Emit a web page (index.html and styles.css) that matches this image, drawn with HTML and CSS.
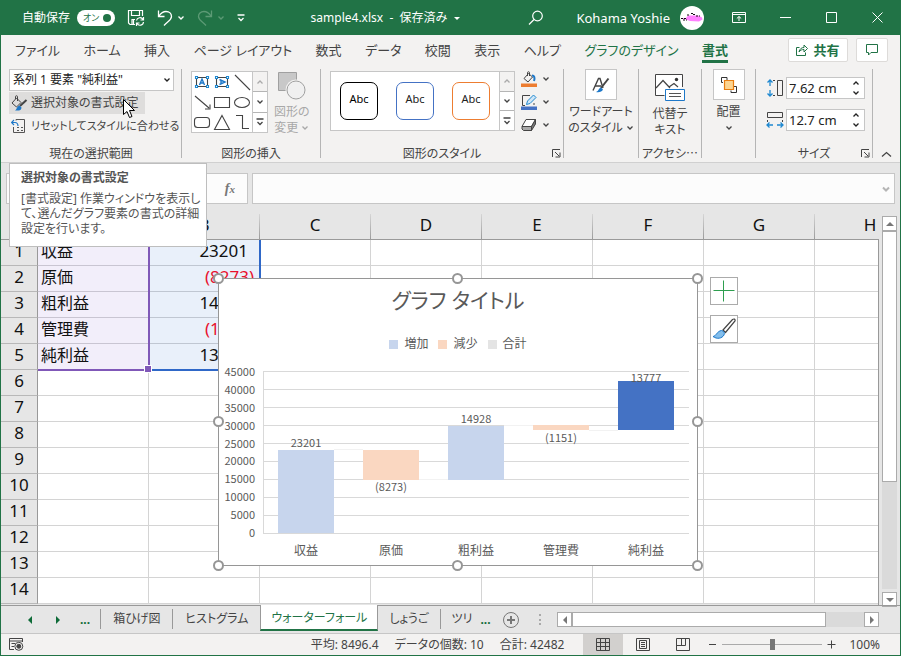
FILE: index.html
```html
<!DOCTYPE html>
<html lang="ja">
<head>
  <meta charset="UTF-8">
  <meta name="viewport" content="width=device-width, initial-scale=1.0">
  <title>sample4.xlsx</title>
  <link rel="stylesheet" href="styles.css">
</head>
<body>
  <!-- Shared icons -->
  <svg class="symbols" width="0" height="0" aria-hidden="true">
    <symbol id="chevron" viewBox="0 0 8 8"><path d="M1.5 2.5 4 5 6.500 2.500" fill="none" stroke="currentColor" stroke-width="1.300"/></symbol>
    <symbol id="chevron-up" viewBox="0 0 8 8"><path d="M1.500 5.500 4 3 6.500 5.500" fill="none" stroke="currentColor" stroke-width="1.300"/></symbol>
    <symbol id="more" viewBox="0 0 8 8"><path d="M0.500 1H7.500M1.500 4 4 6.500 6.500 4" fill="none" stroke="currentColor" stroke-width="1.300"/></symbol>
    <symbol id="launcher" viewBox="0 0 9 9"><path d="M0.500 8V0.500H8M3 3 7 7M8 3.500V8H3.500" fill="none" stroke="#444" stroke-width="1"/></symbol>
  </svg>

  <div class="window">
    <!-- Title bar -->
    <header class="titlebar">
      <div class="quick">
        <span class="quick-label" id="autosave">自動保存</span>
        <button class="toggle" role="switch" aria-checked="true" aria-labelledby="autosave">オン<span class="toggle-dot"></span></button>
        <button class="icon-btn save-btn" aria-label="保存">
          <svg width="18" height="18" viewBox="0 0 18 18" fill="none" stroke="#fff" stroke-width="1.200"><path d="M8 15.500H3L1.500 14V1.500H15.500V7M4.500 1.500V6.500H12.500V1.500M5 15V10.500H8M6.500 11V15"/><path d="M9.500 11.500A3.500 3.500 0 0 1 16 10.500M16.500 8V11H13.500M16.500 13A3.500 3.500 0 0 1 10 14.500M9.500 17V14H12.500"/></svg>
        </button>
        <button class="icon-btn" aria-label="元に戻す">
          <svg width="16" height="18" viewBox="0 0 16 18" fill="none" stroke="#fff" stroke-width="1.300"><path d="M1.500 1.500V7.500H7.500M2 7C4 4 6 2.500 9 2.500C12.500 2.500 14.500 5 14.500 7.500C14.500 11 11 12 7 16.500"/></svg>
          <svg class="chev" width="8" height="8"><use href="#chevron"/></svg>
        </button>
        <button class="icon-btn dim" aria-label="やり直し">
          <svg width="16" height="18" viewBox="0 0 16 18" fill="none" stroke="#5c9a75" stroke-width="1.300"><path d="M14.500 1.500V7.500H8.500M14 7C12 4 10 2.500 7 2.500C3.500 2.500 1.500 5 1.500 7.500C1.500 11 5 12 9 16.500"/></svg>
          <svg class="chev" width="8" height="8"><use href="#chevron"/></svg>
        </button>
        <button class="icon-btn more-btn" aria-label="クイック アクセス"><svg width="8" height="8"><use href="#more"/></svg></button>
      </div>
      <button class="doc-title">sample4.xlsx&nbsp; -&nbsp; 保存済み <span class="caret"></span></button>
      <div class="account">
        <button class="icon-btn" aria-label="検索">
          <svg width="16" height="16" viewBox="0 0 16 16" fill="none" stroke="#fff" stroke-width="1.200"><circle cx="9.500" cy="6" r="4.800"/><path d="M6 9.500 1 14.500"/></svg>
        </button>
        <span class="user">Kohama Yoshie</span>
        <svg class="avatar" width="24" height="24" viewBox="0 0 24 24"><circle cx="12" cy="12" r="12" fill="#fff"/><path d="M1 12H6L8 9.500H14L18 9.500 22 11.500 22.500 13.500 19 15.500 10 15 6 13.500 2 13Z" fill="#ff80ff"/><path d="M1 12.500H6M3 14H7M7 9H10M11 7.500H13M13 8.500H16M16 10H20" stroke="#111" stroke-width="1" fill="none" stroke-dasharray="2 1"/></svg>
      </div>
      <div class="window-buttons">
        <button aria-label="リボンの表示オプション"><svg width="14" height="11" viewBox="0 0 14 11" fill="none" stroke="#fff"><path d="M0.500 0.500H13.500V10.500H0.500ZM0.500 2.500H13.500M7 9V4.500M4.800 6.500 7 4.500 9.200 6.500"/></svg></button>
        <button aria-label="最小化"><svg width="11" height="11" viewBox="0 0 11 11" stroke="#fff"><path d="M0 5.500H11"/></svg></button>
        <button aria-label="最大化"><svg width="11" height="11" viewBox="0 0 11 11" fill="none" stroke="#fff"><path d="M0.500 0.500H10.500V10.500H0.500Z"/></svg></button>
        <button aria-label="閉じる"><svg width="11" height="11" viewBox="0 0 11 11" stroke="#fff"><path d="M0.500 0.500 10.500 10.500M10.500 0.500 0.500 10.500"/></svg></button>
      </div>
    </header>

    <!-- Ribbon tabs -->
    <nav class="tabs">
      <div class="tab-list">
        <a href="#">ファイル</a>
        <a href="#">ホーム</a>
        <a href="#">挿入</a>
        <a href="#">ページ レイアウト</a>
        <a href="#">数式</a>
        <a href="#">データ</a>
        <a href="#">校閲</a>
        <a href="#">表示</a>
        <a href="#">ヘルプ</a>
        <a href="#" class="context">グラフのデザイン</a>
        <a href="#" class="context active">書式</a>
      </div>
      <div class="tab-actions">
        <button class="share">
          <svg width="12" height="12" viewBox="0 0 12 12" fill="none" stroke="#217346"><path d="M3.500 3.500H0.500V11.500H9.500V8.500M3 8C3.500 5 5.500 3.500 8 3.500V1L11.500 4.500 8 8V5.500C6 5.500 4.500 6 3 8Z"/></svg>
          共有
        </button>
        <button class="comment" aria-label="コメント">
          <svg width="12" height="12" viewBox="0 0 12 12" fill="none" stroke="#217346"><path d="M0.500 0.500H11.500V8.500H5L2.500 11V8.500H0.500Z"/></svg>
        </button>
      </div>
    </nav>

    <!-- Ribbon -->
    <section class="ribbon">
      <div class="group selection">
        <div class="group-body column">
          <div class="select-box">
            <select aria-label="グラフ要素"><option>系列 1 要素 "純利益"</option></select>
            <svg width="8" height="8"><use href="#chevron"/></svg>
          </div>
          <button class="cmd hover">
            <svg width="17" height="16" viewBox="0 0 17 16" fill="none"><path d="M4.500 4V1.500C4.500 0.500 6.500 0.500 6.500 1.500V6M5.500 3 1 8 5.500 12 10 7.500Z" stroke="#444"/><path d="M15.500 5 9 11" stroke="#444" stroke-width="2"/><path d="M8 15.500H4C6 14.500 5.500 11.500 8.500 10.500L10.500 12.500C10.500 14.500 9 15.500 8 15.500Z" fill="#1e78c8"/></svg>
            選択対象の書式設定
          </button>
          <button class="cmd small">
            <svg width="17" height="16" viewBox="0 0 17 16" fill="none"><path d="M5 2.500V1.500H13.500V14.500H2.500V9" stroke="#555"/><path d="M0.500 4.500H4C6 4.500 7 6 7 8M3 2 0.500 4.500 3 7" stroke="#1e78c8" stroke-width="1.200"/><path d="M6 9.500H8M6 12.500H8M10 9.500H12M10 12.500H12" stroke="#555"/></svg>
            リセットしてスタイルに合わせる
          </button>
          <svg class="cursor" width="13" height="20" viewBox="0 0 13 20"><path d="M0.500 0.500V15.500L4 12.500 6.500 18.500 9 17.500 6.500 11.500H11.500Z" fill="#fff" stroke="#000"/></svg>
        </div>
        <div class="group-label">現在の選択範囲</div>
        <div class="tooltip" role="tooltip">
          <strong>選択対象の書式設定</strong>
          <p>[書式設定] 作業ウィンドウを表示し<br>て、選んだグラフ要素の書式の詳細<br>設定を行います。</p>
        </div>
      </div>

      <div class="group">
        <div class="group-body shapes">
          <div class="gallery">
            <svg width="60" height="60" viewBox="0 0 60 60" fill="none" stroke="#444" stroke-width="1.100">
              <path d="M4.500 5.500H15.500V14.500H4.500ZM24.500 5.500H35.500V14.500H24.500Z"/>
              <path d="M7.500 13 10 7 12.500 13M8.500 11H11.500M27.500 7.500 33 10 27.500 12.500M29 8.500V11.500" stroke="#1e78c8" stroke-width="1.400"/>
              <g fill="#fff" stroke="#1e88d0"><path d="M3.500 4.500h2v2h-2zM14.500 4.500h2v2h-2zM3.500 13.500h2v2h-2zM14.500 13.500h2v2h-2zM23.500 4.500h2v2h-2zM34.500 4.500h2v2h-2zM23.500 13.500h2v2h-2zM34.500 13.500h2v2h-2z"/></g>
              <path d="M43 3 58 18M3 24 17 36M18 32.500V37H13M22.500 25.500H37.500V35.500H22.500Z"/>
              <ellipse cx="50" cy="30.500" rx="7.500" ry="5"/>
              <rect x="2.500" y="45.500" width="15" height="10" rx="3"/>
              <path d="M30 43.500 37.500 57.500H22.500ZM44 43.500H50.500V56.500H57"/>
            </svg>
            <div class="gallery-scroll">
              <button class="off" aria-label="上"><svg width="8" height="8"><use href="#chevron-up"/></svg></button>
              <button aria-label="下"><svg width="8" height="8"><use href="#chevron"/></svg></button>
              <button aria-label="その他"><svg width="8" height="8"><use href="#more"/></svg></button>
            </div>
          </div>
          <button class="big disabled" disabled>
            <svg width="28" height="30" viewBox="0 0 28 30" stroke="#a0a0a0"><path d="M0.500 1.500H18.500V19.500H0.500Z" fill="#c8c8c8"/><circle cx="18" cy="19" r="10.500" fill="#f3f2f1" stroke="none"/><circle cx="18" cy="19" r="9" fill="#f0f0f0"/></svg>
            図形の<br>変更 <svg width="8" height="8"><use href="#chevron"/></svg>
          </button>
        </div>
        <div class="group-label">図形の挿入</div>
      </div>

      <div class="group">
        <div class="group-body styles">
          <div class="gallery wide">
            <button class="preset black">Abc</button>
            <button class="preset blue">Abc</button>
            <button class="preset orange">Abc</button>
            <div class="gallery-scroll">
              <button class="off" aria-label="上"><svg width="8" height="8"><use href="#chevron-up"/></svg></button>
              <button aria-label="下"><svg width="8" height="8"><use href="#chevron"/></svg></button>
              <button aria-label="その他"><svg width="8" height="8"><use href="#more"/></svg></button>
            </div>
          </div>
          <div class="style-tools">
            <button aria-label="図形の塗りつぶし">
              <svg width="17" height="16" viewBox="0 0 17 16" fill="none"><path d="M6.500 5V1.500C6.500 0.500 8.500 0.500 8.500 1.500V5M7.500 2.500 3 7.500 7 11 11.500 6Z" stroke="#444"/><path d="M11 4.500C13.500 4.500 14 7 13 10" stroke="#1e78c8" stroke-width="2"/><path d="M0 12.500H16V16H0Z" fill="#ed7d31"/></svg>
              <svg width="8" height="8"><use href="#chevron"/></svg>
            </button>
            <button aria-label="図形の枠線">
              <svg width="17" height="16" viewBox="0 0 17 16" fill="none"><path d="M9 1.500H1.500V11.500H4M13 9V11" stroke="#444"/><path d="M5.500 10.500 6.500 7 12.500 1 15 3.500 9 9.500Z" fill="#cfe6f7" stroke="#1e88d0"/><path d="M0 12.500H16V16H0Z" fill="#4472c4"/></svg>
              <svg width="8" height="8"><use href="#chevron"/></svg>
            </button>
            <button aria-label="図形の効果">
              <svg width="17" height="16" viewBox="0 0 17 16"><path d="M5 2.500H14.500L10.500 9.500H1Z" fill="#fff" stroke="#444"/><path d="M1 9.500H10.500V13.500H2.500L1 12Z" fill="#aaa" stroke="#444"/><path d="M14.500 2.500V7L10.500 13.500V9.500Z" fill="#777" stroke="#444"/></svg>
              <svg width="8" height="8"><use href="#chevron"/></svg>
            </button>
          </div>
        </div>
        <div class="group-label">図形のスタイル</div>
        <button class="launcher" aria-label="図形の書式設定"><svg width="9" height="9"><use href="#launcher"/></svg></button>
      </div>

      <div class="group">
        <button class="big">
          <span class="frame"><svg width="20" height="18" viewBox="0 0 20 18" fill="none"><path d="M2 14.500 7.500 2.500H9L12 12M4 10H10" stroke="#444" stroke-width="1.400"/><path d="M17.500 2.500 10 12" stroke="#444" stroke-width="2"/><path d="M5 16C8 15 7.500 12 10 11.500L12 13.500C11 16 8 16.500 5 16Z" fill="#1e78c8"/></svg></span>
          ワードアート<br>のスタイル <svg width="8" height="8"><use href="#chevron"/></svg>
        </button>
      </div>

      <div class="group">
        <button class="big">
          <svg class="alt-icon" width="32" height="32" viewBox="0 0 32 32" fill="none"><path d="M10.500 24.500H1.500V3.500H28.500V16" stroke="#444" fill="#fff"/><path d="M2 17 9 9.500 16 17M15 16 20 12.500 24 16" stroke="#444" stroke-width="1.200"/><circle cx="22.500" cy="8.500" r="1.700" fill="#333"/><path d="M11.500 18.500H30.500V29.500H11.500Z" fill="#fff" stroke="#1e78c8"/><path d="M15 22.500H27M15 25.500H27" stroke="#555"/></svg>
          代替テ<br>キスト
        </button>
        <div class="group-label">アクセシ…</div>
      </div>

      <div class="group">
        <button class="big">
          <span class="frame"><svg width="18" height="18" viewBox="0 0 18 18" fill="none"><path d="M3 6.500H1.500V1.500H7V4M11 14.500V16.500H16.500V10.500H14" stroke="#333"/><path d="M4.500 4.500H13.500V13.500H4.500Z" fill="#fcd490" stroke="#e87d10" stroke-width="1.200"/></svg></span>
          配置<br><svg width="8" height="8"><use href="#chevron"/></svg>
        </button>
      </div>

      <div class="group">
        <div class="group-body column sizes">
          <label class="size-row">
            <svg width="18" height="18" viewBox="0 0 18 18" fill="none"><path d="M4 1V7M1.500 3.500 4 1 6.500 3.500M4 11V17M1.500 14.500 4 17 6.500 14.500" stroke="#1e88d0" stroke-width="1.300"/><path d="M7 1.500H9M7 16.500H9M11.500 1.500H16.500V16.500H11.500Z" stroke="#444"/></svg>
            <span class="spin"><input type="text" value="7.62 cm" aria-label="高さ"><span class="spin-btns"><svg width="8" height="8"><use href="#chevron-up"/></svg><svg width="8" height="8"><use href="#chevron"/></svg></span></span>
          </label>
          <label class="size-row">
            <svg width="18" height="18" viewBox="0 0 18 18" fill="none"><path d="M1.500 1.500H16.500V6.500H1.500ZM1.500 9V11M16.500 9V11" stroke="#444"/><path d="M7 14H1M3.500 11.500 1 14 3.500 16.500M11 14H17M14.500 11.500 17 14 14.500 16.500" stroke="#1e88d0" stroke-width="1.300"/></svg>
            <span class="spin"><input type="text" value="12.7 cm" aria-label="幅"><span class="spin-btns"><svg width="8" height="8"><use href="#chevron-up"/></svg><svg width="8" height="8"><use href="#chevron"/></svg></span></span>
          </label>
        </div>
        <div class="group-label">サイズ</div>
        <button class="launcher" aria-label="サイズとプロパティ"><svg width="9" height="9"><use href="#launcher"/></svg></button>
      </div>

      <div class="collapse">
        <button aria-label="リボンを折りたたむ"><svg width="11" height="7" viewBox="0 0 11 7" fill="none" stroke="#444" stroke-width="1.300"><path d="M1 5.500 5.500 1.500 10 5.500"/></svg></button>
      </div>
    </section>

    <!-- Formula bar -->
    <div class="formula">
      <input class="name-box" type="text" aria-label="名前ボックス">
      <div class="fx-box"><button class="fx">f<small>x</small></button></div>
      <div class="formula-field">
        <input type="text" aria-label="数式バー">
        <svg width="8" height="8" viewBox="0 0 8 8" fill="none" stroke="#b5b5b5" stroke-width="2"><path d="M1 2.500 4 5.500 7 2.500"/></svg>
      </div>
    </div>

    <!-- Sheet -->
    <main class="sheet-area">
      <div class="sheet">
        <table>
          <thead>
            <tr><th class="corner"></th><th>A</th><th>B</th><th>C</th><th>D</th><th>E</th><th>F</th><th>G</th><th>H</th></tr>
          </thead>
          <tbody>
            <tr><th>1</th><td class="cat">収益</td><td class="val">23201</td><td></td><td></td><td></td><td></td><td></td><td></td></tr>
            <tr><th>2</th><td class="cat">原価</td><td class="val minus">(8273)</td><td></td><td></td><td></td><td></td><td></td><td></td></tr>
            <tr><th>3</th><td class="cat">粗利益</td><td class="val">14928</td><td></td><td></td><td></td><td></td><td></td><td></td></tr>
            <tr><th>4</th><td class="cat">管理費</td><td class="val minus">(1151)</td><td></td><td></td><td></td><td></td><td></td><td></td></tr>
            <tr><th>5</th><td class="cat">純利益</td><td class="val">13777</td><td></td><td></td><td></td><td></td><td></td><td></td></tr>
            <tr><th>6</th><td></td><td></td><td></td><td></td><td></td><td></td><td></td><td></td></tr>
            <tr><th>7</th><td></td><td></td><td></td><td></td><td></td><td></td><td></td><td></td></tr>
            <tr><th>8</th><td></td><td></td><td></td><td></td><td></td><td></td><td></td><td></td></tr>
            <tr><th>9</th><td></td><td></td><td></td><td></td><td></td><td></td><td></td><td></td></tr>
            <tr><th>10</th><td></td><td></td><td></td><td></td><td></td><td></td><td></td><td></td></tr>
            <tr><th>11</th><td></td><td></td><td></td><td></td><td></td><td></td><td></td><td></td></tr>
            <tr><th>12</th><td></td><td></td><td></td><td></td><td></td><td></td><td></td><td></td></tr>
            <tr><th>13</th><td></td><td></td><td></td><td></td><td></td><td></td><td></td><td></td></tr>
            <tr><th>14</th><td></td><td></td><td></td><td></td><td></td><td></td><td></td><td></td></tr>
          </tbody>
        </table>
        <div class="range range-values"></div>
        <div class="range range-names"></div>

        <!-- Waterfall chart -->
        <figure class="chart">
          <figcaption>グラフ タイトル</figcaption>
          <ul class="legend">
            <li class="up">増加</li>
            <li class="down">減少</li>
            <li class="total">合計</li>
          </ul>
          <svg class="plot" viewBox="0 0 478 199">
            <path class="gridlines" d="M44 5.500H470M44 23.500H470M44 41.500H470M44 59.500H470M44 77.500H470M44 95.500H470M44 113.500H470M44 131.500H470M44 149.500H470M44.500 5V168M44 167.500H470"/>
            <path class="connectors" d="M115 83.500H144M200 113.500H229M285 59.500H314M370 64.500H399"/>
            <rect class="bar-up" x="59" y="84" width="56" height="83"/>
            <rect class="bar-down" x="144" y="84" width="56" height="30"/>
            <rect class="bar-up" x="229" y="60" width="56" height="54"/>
            <rect class="bar-down" x="314" y="59" width="56" height="5"/>
            <rect class="bar-total" x="399" y="15" width="56" height="49"/>
            <g class="axis">
              <text x="36" y="10">45000</text>
              <text x="36" y="28">40000</text>
              <text x="36" y="46">35000</text>
              <text x="36" y="64">30000</text>
              <text x="36" y="82">25000</text>
              <text x="36" y="99">20000</text>
              <text x="36" y="117">15000</text>
              <text x="36" y="135">10000</text>
              <text x="36" y="153">5000</text>
              <text x="36" y="171">0</text>
            </g>
            <g class="values">
              <text x="87" y="81">23201</text>
              <text x="172" y="125">(8273)</text>
              <text x="257" y="57">14928</text>
              <text x="342" y="76">(1151)</text>
              <text x="427" y="16">13777</text>
            </g>
            <g class="cats">
              <text x="87" y="189">収益</text>
              <text x="172" y="189">原価</text>
              <text x="257" y="189">粗利益</text>
              <text x="342" y="189">管理費</text>
              <text x="427" y="189">純利益</text>
            </g>
          </svg>
          <span class="handle top left"></span>
          <span class="handle top center"></span>
          <span class="handle top right"></span>
          <span class="handle middle left"></span>
          <span class="handle middle right"></span>
          <span class="handle bottom left"></span>
          <span class="handle bottom center"></span>
          <span class="handle bottom right"></span>
          <div class="chart-tools">
            <button aria-label="グラフ要素"><svg width="22" height="22" viewBox="0 0 22 22" stroke="#2e9e4f"><path d="M0.500 10.500H21.500M10.500 0.500V21.500"/></svg></button>
            <button aria-label="グラフ スタイル"><svg width="24" height="22" viewBox="0 0 24 22"><path d="M11 12 20.500 1.500C22 0.500 23.500 1 23 3L13.500 14.500Z" fill="#fff" stroke="#444" stroke-width="1.200"/><path d="M1 18.500C4 18.500 5 13 9.500 12.500C12 13 13 15 12 17C10 20.500 5 21.500 1 18.500Z" fill="#83beec" stroke="#1e78c8"/></svg></button>
          </div>
        </figure>
      </div>
      <div class="vscroll">
        <button aria-label="上へ"><span class="arrow up"></span></button>
        <div class="vtrack"><div class="vthumb"></div></div>
        <button aria-label="下へ"><span class="arrow down"></span></button>
      </div>
    </main>

    <!-- Sheet tabs -->
    <div class="sheet-bar">
      <div class="sheet-nav">
        <button aria-label="前のシート"><span class="arrow left green"></span></button>
        <button aria-label="次のシート"><span class="arrow right green"></span></button>
        <button class="dots">...</button>
      </div>
      <div class="sheet-tabs">
        <button>箱ひげ図</button>
        <button>ヒストグラム</button>
        <button class="current">ウォーターフォール</button>
        <button>しょうご</button>
        <button class="cut">ツリ</button>
      </div>
      <button class="dots">...</button>
      <button class="add" aria-label="新しいシート"><svg width="16" height="16" viewBox="0 0 16 16" fill="none" stroke="#777"><circle cx="8" cy="8" r="7.500"/><path d="M8 4V12M4 8H12" stroke-width="2"/></svg></button>
      <span class="grip"></span>
      <div class="hscroll">
        <button aria-label="左へ"><span class="arrow left"></span></button>
        <div class="htrack"><div class="hthumb"></div></div>
        <button aria-label="右へ"><span class="arrow right"></span></button>
      </div>
    </div>

    <!-- Status bar -->
    <footer class="status">
      <button class="macro" aria-label="マクロの記録"><svg width="15" height="13" viewBox="0 0 15 13" fill="none" stroke="#444"><path d="M5 11.500H0.500V0.500H13.500V4M0.500 3H13.500M2.500 5.500H6M2.500 8.500H5"/><circle cx="9.800" cy="8.300" r="4"/><circle cx="9.800" cy="8.300" r="2" fill="#444"/></svg></button>
      <div class="stats">
        <span>平均: 8496.4</span>
        <span>データの個数: 10</span>
        <span>合計: 42482</span>
      </div>
      <div class="views">
        <button class="on" aria-label="標準"><svg width="14" height="13" viewBox="0 0 14 13" fill="none" stroke="#444"><path d="M0.500 0.500H13.500V12.500H0.500ZM0.500 4.500H13.500M0.500 8.500H13.500M4.500 0.500V12.500M9.500 0.500V12.500"/></svg></button>
        <button aria-label="ページ レイアウト"><svg width="14" height="13" viewBox="0 0 14 13" fill="none" stroke="#444"><path d="M0.500 0.500H13.500V12.500H0.500ZM3.500 2.500H10.500V10.500H3.500ZM5 4.500H9M5 6.500H9M5 8.500H9"/></svg></button>
        <button aria-label="改ページ プレビュー"><svg width="14" height="13" viewBox="0 0 14 13" fill="none" stroke="#444"><path d="M0.500 0.500H13.500V12.500H0.500ZM0.500 7.500H9.500V0.500M5.500 0.500V7.500"/></svg></button>
      </div>
      <div class="zoom">
        <button aria-label="縮小"><svg width="9" height="9" viewBox="0 0 9 9" stroke="#444"><path d="M1 4.500H8"/></svg></button>
        <input type="range" min="0" max="100" value="50" aria-label="ズーム">
        <button aria-label="拡大"><svg width="9" height="9" viewBox="0 0 9 9" stroke="#444"><path d="M0.500 4.500H8.500M4.500 0.500V8.500"/></svg></button>
        <span class="percent">100%</span>
      </div>
    </footer>
  </div>
</body>
</html>
```
FILE: styles.css
```css
* {
  margin: 0;
  padding: 0;
  box-sizing: border-box;
}

body {
  font-family: "Noto Sans", "Noto Sans CJK JP", sans-serif;
  font-size: 12px;
  line-height: 16px;
  font-feature-settings: "palt";
  color: #444;
}

button,
input,
select {
  font: inherit;
  font-feature-settings: inherit;
  color: inherit;
  border: none;
  background: none;
}

svg {
  flex: none;
}

a {
  color: inherit;
  text-decoration: none;
}

.symbols {
  position: absolute;
}

.window {
  display: flex;
  flex-direction: column;
  height: 100vh;
  background: #e6e6e6;
  border: 1px solid #217346;
  border-top: none;
  overflow: hidden;
}

/* Title bar */
.titlebar {
  display: flex;
  align-items: center;
  height: 35px;
  flex: none;
  background: #217346;
  color: #fff;
}

.quick {
  display: flex;
  align-items: center;
  flex: 1 1 310px;
  gap: 12px;
  padding-left: 21px;
}

.quick-label {
  margin-right: -5px;
}

.toggle {
  display: flex;
  align-items: center;
  justify-content: space-between;
  width: 38px;
  height: 16px;
  padding: 0 4px 0 6px;
  border-radius: 8px;
  background: #fff;
  color: #217346;
  font-size: 9px;
}

.toggle-dot {
  width: 8px;
  height: 8px;
  border-radius: 50%;
  background: #217346;
}

.icon-btn {
  display: flex;
  align-items: center;
  gap: 4px;
}

.dim {
  color: #5c9a75;
}

.doc-title {
  flex: none;
  font-size: 12px;
}

.caret {
  display: inline-block;
  margin-left: 4px;
  vertical-align: middle;
  border: 3px solid transparent;
  border-top: 3px solid #fff;
  border-bottom: none;
}

.account {
  display: flex;
  align-items: center;
  justify-content: flex-end;
  flex: 1 1 244px;
}

.user {
  margin: 0 10px 0 32px;
  font-size: 13px;
}

.window-buttons {
  display: flex;
  margin-left: 12px;
}

.window-buttons button {
  display: flex;
  align-items: center;
  justify-content: center;
  width: 46px;
  height: 35px;
}

/* Ribbon tabs */
.tabs {
  display: flex;
  justify-content: space-between;
  height: 31px;
  flex: none;
  padding: 3px 12px 0 14px;
  background: #f3f2f1;
}

.tab-list {
  display: flex;
  justify-content: space-between;
  flex: 0 1 713px;
  font-size: 13px;
}

.tab-list a {
  height: 25px;
  line-height: 24px;
  white-space: nowrap;
}

.context {
  color: #217346;
}

.tab-list .active {
  font-weight: bold;
  border-bottom: 3px solid #217346;
}

.tab-actions {
  display: flex;
  gap: 8px;
}

.tab-actions button {
  display: flex;
  align-items: center;
  justify-content: center;
  gap: 5px;
  height: 24px;
  border: 1px solid #dddbd9;
  border-radius: 2px;
  background: #fff;
  color: #217346;
  font-size: 13px;
  font-weight: bold;
}

.share {
  width: 60px;
}

.comment {
  width: 32px;
}

/* Ribbon */
.ribbon {
  display: grid;
  grid-template-columns: 181fr 139fr 243fr 75fr 63fr 54fr 117fr 27fr;
  height: 97px;
  flex: none;
  padding: 3px 0 4px;
  border-bottom: 1px solid #d0d0d0;
  background: #f3f2f1;
}

.group {
  position: relative;
  display: flex;
  flex-direction: column;
  min-width: 0;
  border-right: 1px solid #b5b5b5;
}

.group-body {
  display: flex;
}

.column {
  position: relative;
  flex-direction: column;
  align-items: flex-start;
}

.group-label {
  margin-top: auto;
  font-family: "Noto Sans CJK JP", sans-serif;
  line-height: 11px;
  text-align: center;
  white-space: nowrap;
}

.launcher {
  position: absolute;
  right: 2px;
  bottom: 0;
  height: 9px;
  line-height: 0;
}

.selection .group-body {
  padding: 0 7px 0 8px;
  gap: 1px;
}

.select-box {
  display: flex;
  align-items: center;
  width: 100%;
  height: 22px;
  padding-right: 2px;
  border: 1px solid #c6c6c6;
  background: #fff;
  color: #222;
}

.select-box select {
  flex: 1;
  appearance: none;
  padding-left: 3px;
}

.cmd {
  display: flex;
  align-items: center;
  gap: 3px;
  height: 22px;
  padding: 0 6px 0 2px;
  white-space: nowrap;
}

.cmd.small {
  padding-right: 0;
  font-size: 11px;
}

.cmd.hover {
  background: #dedddc;
}

.cursor {
  position: absolute;
  left: 122px;
  top: 30px;
}

.tooltip {
  position: absolute;
  z-index: 5;
  left: 8px;
  top: 94px;
  width: 198px;
  padding: 6px 6px 10px 11px;
  border: 1px solid #bebebe;
  background: #fff;
  color: #555;
  line-height: 15px;
  white-space: nowrap;
}

.tooltip strong {
  display: block;
  margin-bottom: 6px;
}

.shapes {
  padding: 2px 0 0 9px;
  gap: 6px;
}

.gallery {
  display: flex;
  height: 62px;
  border: 1px solid #c6c6c6;
  background: #fff;
}

.gallery-scroll {
  display: flex;
  flex-direction: column;
  width: 15px;
  border-left: 1px solid #c6c6c6;
}

.gallery-scroll button {
  display: flex;
  align-items: center;
  justify-content: center;
  flex: 1;
  background: #fff;
}

.gallery-scroll button + button {
  border-top: 1px solid #b5b5b5;
}

.gallery-scroll .off {
  background: #f3f2f1;
  color: #aaa;
}

.big {
  line-height: 16px;
  text-align: center;
  white-space: nowrap;
}

.big > svg:first-child {
  display: block;
  margin: 0 auto 3px;
}

.disabled {
  color: #a8a8a8;
}

.big > .alt-icon:first-child {
  margin-top: 2px;
}

.frame {
  display: flex;
  align-items: center;
  justify-content: center;
  width: 32px;
  height: 31px;
  margin: 0 auto 4px;
  border: 1px solid #c6c6c6;
  background: #fff;
}

.styles {
  padding: 2px 0 0 9px;
  gap: 6px;
}

.wide {
  align-items: center;
  gap: 18px;
  height: 60px;
  padding-left: 9px;
}

.wide .gallery-scroll {
  align-self: stretch;
  margin-left: -9px;
}

.preset {
  width: 38px;
  height: 38px;
  padding-bottom: 4px;
  border: 1px solid;
  border-radius: 7px;
  font-size: 11px;
}

.black {
  border-color: #000;
  color: #000;
}

.blue {
  border-color: #4472c4;
  color: #222;
}

.orange {
  border-color: #ed7d31;
  color: #222;
}

.style-tools {
  display: flex;
  flex-direction: column;
  gap: 7px;
}

.style-tools button {
  display: flex;
  align-items: center;
  gap: 4px;
}

.sizes {
  gap: 10px;
  padding: 8px 7px 0 10px;
}

.size-row {
  display: flex;
  align-items: center;
  gap: 2px;
}

.spin {
  display: flex;
  height: 22px;
  width: 79px;
  border: 1px solid #c6c6c6;
  background: #fff;
  color: #222;
}

.spin input {
  flex: 1;
  min-width: 0;
  padding-left: 2px;
  font-size: 13px;
}

.spin-btns {
  display: flex;
  flex-direction: column;
  justify-content: center;
  gap: 2px;
  padding-right: 4px;
}

.collapse {
  display: flex;
  align-items: flex-end;
  justify-content: center;
}

.collapse button {
  line-height: 0;
}

/* Formula bar */
.formula {
  display: flex;
  gap: 4px;
  height: 51px;
  flex: none;
  padding: 10px 5px 10px 5px;
}

.name-box,
.fx-box,
.formula-field {
  border: 1px solid #c6c6c6;
  background: #fcfcfc;
}

.name-box {
  width: 110px;
}

.fx-box {
  display: flex;
  justify-content: flex-end;
  width: 128px;
  padding-right: 12px;
}

.fx {
  font: italic bold 14px "Liberation Serif", serif;
  color: #777;
}

.fx small {
  font-size: 11px;
}

.formula-field {
  display: flex;
  align-items: center;
  flex: 1;
  padding-right: 4px;
}

.formula-field input {
  flex: 1;
}

/* Sheet */
.sheet-area {
  display: flex;
  flex: 1;
  min-height: 0;
}

.sheet {
  position: relative;
  flex: 1;
  min-width: 0;
  overflow: hidden;
}

.sheet::after {
  content: "";
  position: absolute;
  top: 25px;
  right: 0;
  bottom: 0;
  border-right: 1px solid #999;
}

table {
  width: 925px;
  table-layout: fixed;
  border-collapse: separate;
  border-spacing: 0;
  font-size: 16px;
  line-height: 20px;
  color: #111;
}

th {
  height: 26px;
  padding-bottom: 4px;
  font-size: 17px;
  font-weight: normal;
  background: #e6e6e6;
}

thead th {
  border-bottom: 1px solid #999;
  border-right: 1px solid;
  border-image: linear-gradient(#d8d8d8, #999) 1;
}

.corner {
  width: 37px;
}

tbody th {
  border-right: 1px solid #999;
  border-bottom: 1px solid #b8b8b8;
}

td {
  height: 26px;
  padding-bottom: 4px;
  border-right: 1px solid #d4d4d4;
  border-bottom: 1px solid #d4d4d4;
  background: #fff;
  white-space: nowrap;
}

.cat {
  padding-left: 3px;
  background: #f2eefa;
  border-color: #c9c5d2;
}

.val {
  padding-right: 11px;
  font-size: 17px;
  text-align: right;
  background: #e9f0fa;
  border-color: #c0c7d2;
}

.minus {
  padding-right: 5px;
  color: #e8112d;
}

/* Source range outlines */
.range {
  position: absolute;
  top: 26px;
  width: 112px;
  height: 131px;
  border: 2px solid;
  border-top: none;
  border-left: none;
}

.range-names {
  left: 37px;
  border-color: #8058b8;
}

.range-values {
  left: 148px;
  border-color: #2f68c8;
}

.range-names::after {
  content: "";
  position: absolute;
  right: -4px;
  bottom: -4px;
  width: 6px;
  height: 6px;
  border: 1px solid #fff;
  background: #8058b8;
}

/* Chart */
.chart {
  position: absolute;
  left: 217px;
  top: 64px;
  width: 480px;
  border: 1px solid #969696;
  background: #fff;
  color: #595959;
}

.chart figcaption {
  padding-top: 9px;
  font-size: 21px;
  line-height: 24px;
  text-align: center;
}

.legend {
  display: flex;
  justify-content: center;
  gap: 10px;
  margin-top: 24px;
  list-style: none;
}

.legend li {
  display: flex;
  align-items: center;
  gap: 6px;
}

.legend li::before {
  content: "";
  width: 9px;
  height: 9px;
}

.up::before {
  background: #c7d5ed;
}

.down::before {
  background: #fad7c1;
}

.total::before {
  background: #e4e4e4;
}

.plot {
  display: block;
  width: 100%;
  margin-top: 14px;
  font-family: "Noto Sans CJK JP", sans-serif;
}

.gridlines {
  fill: none;
  stroke: #d9d9d9;
}

.connectors {
  stroke: #f2f2f2;
}

.bar-up {
  fill: #c7d5ed;
}

.bar-down {
  fill: #fad7c1;
}

.bar-total {
  fill: #4472c4;
}

.plot text {
  fill: #595959;
  font-size: 11px;
}

.plot .cats text {
  font-size: 12px;
}

.axis {
  text-anchor: end;
}

.values,
.cats {
  text-anchor: middle;
}

.handle {
  position: absolute;
  width: 11px;
  height: 11px;
  border: 2px solid #969696;
  border-radius: 50%;
  background: #fff;
}

.handle.top {
  top: -6px;
}

.handle.middle {
  top: calc(50% - 6px);
}

.handle.bottom {
  bottom: -6px;
}

.handle.left {
  left: -6px;
}

.handle.center {
  left: calc(50% - 6px);
}

.handle.right {
  right: -6px;
}

.chart-tools {
  position: absolute;
  left: 491px;
  top: -2px;
  display: flex;
  flex-direction: column;
  gap: 10px;
}

.chart-tools button {
  display: flex;
  align-items: center;
  justify-content: center;
  width: 28px;
  height: 28px;
  border: 1px solid #ababab;
  background: #fff;
}

/* Scroll bars */
.vscroll {
  display: flex;
  flex-direction: column;
  width: 15px;
  margin: 2px 3px -2px;
}

.vscroll button,
.hscroll button {
  display: flex;
  align-items: center;
  justify-content: center;
  width: 15px;
  height: 15px;
  border: 1px solid #ababab;
  background: #fff;
}

.vtrack {
  flex: 1;
  margin-bottom: 3px;
  background: #dadada;
}

.vthumb {
  height: 70%;
  border: 1px solid #ababab;
  background: #fff;
}

.arrow {
  display: block;
  border: 4px solid transparent;
}

.arrow.up {
  border-top: none;
  border-bottom-color: #777;
}

.arrow.down {
  border-bottom: none;
  border-top-color: #777;
}

.arrow.left {
  border-left: none;
  border-right-color: #777;
}

.arrow.right {
  border-right: none;
  border-left-color: #777;
}

.arrow.left.green {
  border-right-color: #0e6b38;
}

.arrow.right.green {
  border-left-color: #0e6b38;
}

/* Sheet tabs */
.sheet-bar {
  display: flex;
  align-items: center;
  height: 28px;
  flex: none;
  border-top: 1px solid #999;
}

.sheet-nav {
  display: flex;
  align-items: center;
  gap: 24px;
  padding: 0 10px 0 27px;
}

.sheet-nav button {
  line-height: 0;
}

.dots,
.sheet-nav .dots {
  font-weight: bold;
  line-height: 16px;
  color: #0e6b38;
}

.sheet-nav .dots {
  margin-left: -4px;
}

.sheet-tabs {
  display: flex;
  align-items: center;
  align-self: stretch;
  margin-top: -1px;
}

.sheet-tabs button {
  height: 20px;
  padding: 0 12px;
  border-left: 1px solid #999;
  white-space: nowrap;
}

.sheet-tabs .current {
  align-self: flex-start;
  height: 26px;
  padding: 2px 10px 0;
  border-right: 1px solid #999;
  border-bottom: 2px solid #217346;
  background: #fff;
  color: #217346;
}

.sheet-tabs .current + button {
  padding: 0 11px;
  border-left: none;
}

.sheet-tabs .cut {
  padding: 0 8px 0 11px;
}

.add {
  margin-left: 12px;
  line-height: 0;
}

.grip {
  margin: 0 auto 0 20px;
  height: 11px;
  border-left: 2px dotted #aaa;
}

.hscroll {
  display: flex;
  width: 322px;
  margin-right: 21px;
}

.htrack {
  flex: 1;
  background: #dadada;
}

.hthumb {
  width: 87%;
  height: 15px;
  border: 1px solid #ababab;
  background: #fff;
}

/* Status bar */
.status {
  display: flex;
  align-items: center;
  height: 22px;
  flex: none;
  padding: 0 20px 0 8px;
  border-top: 1px solid #c6c6c6;
  background: #f3f2f1;
}

.macro {
  line-height: 0;
}

.stats {
  display: flex;
  gap: 16px;
  margin-left: auto;
}

.views {
  display: flex;
  align-self: stretch;
  margin-left: 19px;
}

.views button {
  display: flex;
  align-items: center;
  justify-content: center;
  width: 40px;
}

.views .on {
  background: #d2d0ce;
}

.zoom {
  display: flex;
  align-items: center;
  gap: 5px;
  margin-left: 5px;
}

.zoom button {
  line-height: 0;
}

.zoom input {
  appearance: none;
  width: 100px;
  height: 11px;
  background: linear-gradient(#aaa, #aaa) center / 100% 1px no-repeat;
}

.zoom input::-webkit-slider-thumb {
  appearance: none;
  width: 5px;
  height: 11px;
  background: #777;
}

.percent {
  margin-left: 8px;
}
```
